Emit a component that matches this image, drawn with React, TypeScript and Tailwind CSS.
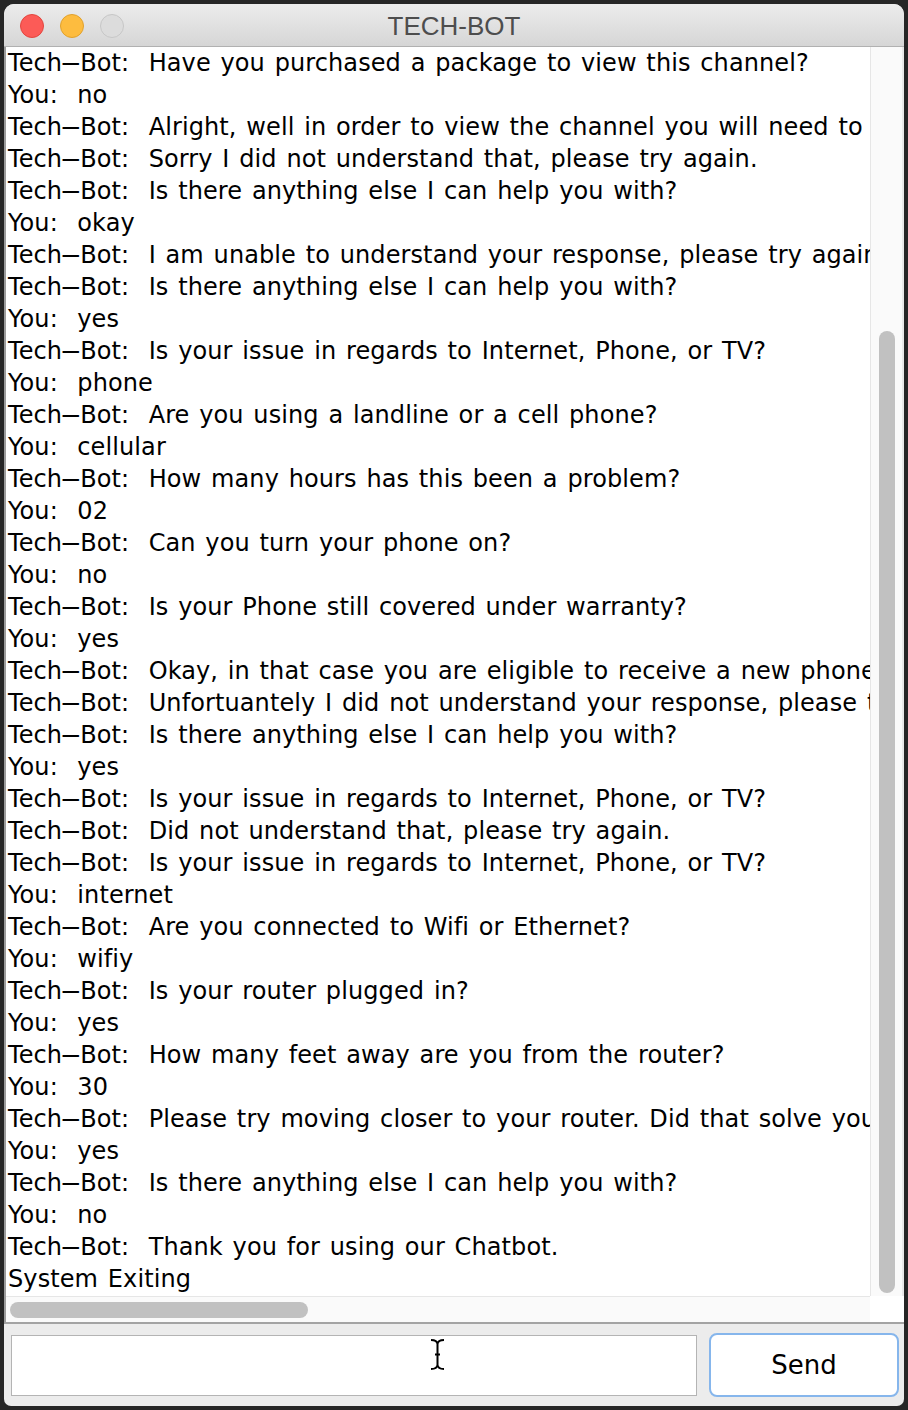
import React from "react";

const lines: string[] = [
  "Tech-Bot:  Have you purchased a package to view this channel?",
  "You:  no",
  "Tech-Bot:  Alright, well in order to view the channel you will need to purchase the package.",
  "Tech-Bot:  Sorry I did not understand that, please try again.",
  "Tech-Bot:  Is there anything else I can help you with?",
  "You:  okay",
  "Tech-Bot:  I am unable to understand your response, please try again.",
  "Tech-Bot:  Is there anything else I can help you with?",
  "You:  yes",
  "Tech-Bot:  Is your issue in regards to Internet, Phone, or TV?",
  "You:  phone",
  "Tech-Bot:  Are you using a landline or a cell phone?",
  "You:  cellular",
  "Tech-Bot:  How many hours has this been a problem?",
  "You:  02",
  "Tech-Bot:  Can you turn your phone on?",
  "You:  no",
  "Tech-Bot:  Is your Phone still covered under warranty?",
  "You:  yes",
  "Tech-Bot:  Okay, in that case you are eligible to receive a new phone.",
  "Tech-Bot:  Unfortuantely I did not understand your response, please try again.",
  "Tech-Bot:  Is there anything else I can help you with?",
  "You:  yes",
  "Tech-Bot:  Is your issue in regards to Internet, Phone, or TV?",
  "Tech-Bot:  Did not understand that, please try again.",
  "Tech-Bot:  Is your issue in regards to Internet, Phone, or TV?",
  "You:  internet",
  "Tech-Bot:  Are you connected to Wifi or Ethernet?",
  "You:  wifiy",
  "Tech-Bot:  Is your router plugged in?",
  "You:  yes",
  "Tech-Bot:  How many feet away are you from the router?",
  "You:  30",
  "Tech-Bot:  Please try moving closer to your router. Did that solve your problem?",
  "You:  yes",
  "Tech-Bot:  Is there anything else I can help you with?",
  "You:  no",
  "Tech-Bot:  Thank you for using our Chatbot.",
  "System Exiting",
];

function Line({ text }: { text: string }) {
  if (text.startsWith("Tech-Bot:")) {
    const rest = text.slice("Tech-Bot:".length);
    return (
      <div className="whitespace-pre h-[32px]">
        Tech
        <span className="inline-block w-[18px] text-center scale-x-[2.6]">-</span>
        Bot:{rest}
      </div>
    );
  }
  return <div className="whitespace-pre h-[32px]">{text}</div>;
}

export default function App() {
  return (
    <div className="w-[908px] h-[1410px] bg-[#262626] p-[4px] relative">
      <div className="flex flex-col h-full rounded-t-[10px] rounded-b-[7px] overflow-hidden bg-[#ececec]">
        {/* Title bar */}
        <div className="relative h-[43px] shrink-0 bg-gradient-to-b from-[#ececec] to-[#d6d6d6] border-b border-[#b1b1b1] flex items-center">
          <div className="flex items-center gap-[16px] pl-[16px] pt-[1px]">
            <div className="w-[24px] h-[24px] rounded-full bg-[#fc5b57] border border-[#e2463f]" />
            <div className="w-[24px] h-[24px] rounded-full bg-[#fdbc3f] border border-[#e0a12d]" />
            <div className="w-[24px] h-[24px] rounded-full bg-[#dcdcdc] border border-[#c6c6c6]" />
          </div>
          <div className="absolute inset-0 flex items-center justify-center pt-[2px] text-[26px] text-[#4d4d4d] font-['Liberation_Sans',Arial,sans-serif]">
            TECH-BOT
          </div>
        </div>

        {/* Scroll pane */}
        <div className="flex flex-col h-[1277px] shrink-0 border-l-[2px] border-[#9c9c9c] border-b-[2px] border-b-[#a3a3a3] bg-white">
          <div className="flex h-[1249px]">
            <div className="w-[864px] overflow-hidden bg-white pl-[2px] font-['DejaVu_Sans',sans-serif] text-[24px] leading-[32px] tracking-[0.1px] [word-spacing:2px] text-black">
              {lines.map((l, i) => (
                <Line key={i} text={l} />
              ))}
            </div>
            <div className="w-[34px] bg-[#fafafa] border-l border-[#e6e6e6] border-r-[2px] border-r-[#e9e9e9] flex flex-col items-center">
              <div className="w-[16px] mt-[284px] mb-[3px] flex-1 rounded-full bg-[#c1c1c1]" />
            </div>
          </div>
          <div className="flex h-[26px]">
            <div className="w-[864px] bg-[#fafafa] border-t border-[#e6e6e6] flex items-center pl-[4px]">
              <div className="w-[298px] h-[16px] rounded-full bg-[#c1c1c1]" />
            </div>
            <div className="w-[34px] bg-white" />
          </div>
        </div>

        {/* Bottom panel */}
        <div className="flex-1 flex items-start pt-[9px] pl-[7px] gap-[12px]">
          <div className="w-[686px] h-[61px] mt-[2px] bg-white border border-[#b4b4b4]" />
          <div className="w-[190px] h-[64px] rounded-[8px] border-[2px] border-[#86b6ec] bg-white flex items-center justify-center text-[26px] text-black font-['DejaVu_Sans',sans-serif]">
            Send
          </div>
        </div>
      </div>

      {/* I-beam cursor */}
      <svg className="absolute left-[430px] top-[1339px]" width="15" height="32" viewBox="0 0 15 32">
        <path d="M1 1 Q7 1 7.5 5 Q8 1 14 1 M7.5 5 L7.5 26 M5 15.5 L10 15.5 M1 30 Q7 30 7.5 26 Q8 30 14 30" stroke="#000" strokeWidth="2" fill="none" />
      </svg>
    </div>
  );
}
